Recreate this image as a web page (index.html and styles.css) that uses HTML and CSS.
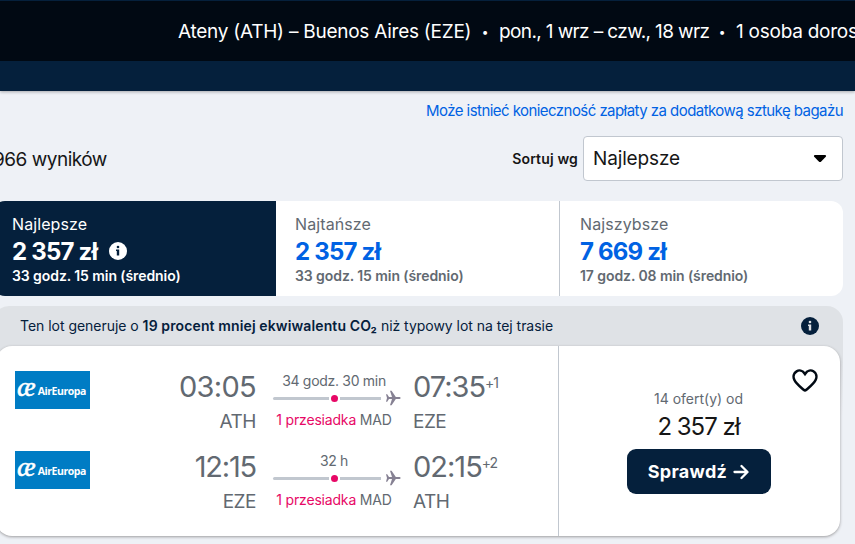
FILE: index.html
```html
<!DOCTYPE html>
<html lang="pl">
<head>
    <meta charset="UTF-8">
    <meta name="viewport" content="width=device-width, initial-scale=1.0">
    <title>Ateny (ATH) – Buenos Aires (EZE)</title>
    <link rel="stylesheet" href="styles.css">
</head>
<body>
    <header class="header">
        <div class="search-summary">
            <span class="route">Ateny (ATH) – Buenos Aires (EZE)</span>
            <span class="dot">•</span>
            <span class="dates">pon., 1 wrz – czw., 18 wrz</span>
            <span class="dot">•</span>
            <span class="travellers">1 osoba dorosła</span>
        </div>
    </header>

    <main class="results">
        <a class="baggage-link">Może istnieć konieczność zapłaty za dodatkową sztukę bagażu</a>

        <div class="toolbar">
            <span class="count">966 wyników</span>
            <div class="sort">
                <span class="sort-label">Sortuj wg</span>
                <div class="select">
                    <span class="select-value">Najlepsze</span>
                    <svg class="caret" width="14" height="9" viewBox="0 0 14 9"><path d="M2 1h10c1 0 1.400 1 .8 1.700L8.200 7.500c-.7.700-1.700.7-2.400 0L1.200 2.700C.6 2 1 1 2 1z"/></svg>
                </div>
            </div>
        </div>

        <div class="tabs">
            <div class="tab active">
                <span class="tab-name">Najlepsze</span>
                <div class="tab-price">
                    <span>2 357 zł</span>
                    <svg class="info" width="18" height="18" viewBox="0 0 18 18"><circle cx="9" cy="9" r="9" fill="#fff"/><path d="M7 7.500h3.200v6H7.800V9H7z" fill="#05203c"/><circle cx="9" cy="5" r="1.300" fill="#05203c"/></svg>
                </div>
                <span class="tab-time">33 godz. 15 min (średnio)</span>
            </div>
            <div class="tab">
                <span class="tab-name">Najtańsze</span>
                <div class="tab-price"><span>2 357 zł</span></div>
                <span class="tab-time">33 godz. 15 min (średnio)</span>
            </div>
            <div class="tab">
                <span class="tab-name">Najszybsze</span>
                <div class="tab-price"><span>7 669 zł</span></div>
                <span class="tab-time">17 godz. 08 min (średnio)</span>
            </div>
        </div>

        <div class="ticket-wrap">
            <div class="eco">
                <p class="eco-text">Ten lot generuje o <strong>19 procent mniej ekwiwalentu CO₂</strong> niż typowy lot na tej trasie</p>
                <svg class="info" width="18" height="18" viewBox="0 0 18 18"><circle cx="9" cy="9" r="9" fill="#05203c"/><path d="M7 7.500h3.200v6H7.800V9H7z" fill="#dfe2e6"/><circle cx="9" cy="5" r="1.300" fill="#dfe2e6"/></svg>
            </div>
            <div class="ticket">
                <div class="legs">
                    <div class="leg">
                        <div class="logo"><span class="logo-ae">æ</span><span class="logo-name">AirEuropa</span></div>
                        <div class="depart"><span class="time">03:05</span><span class="airport">ATH</span></div>
                        <div class="stops">
                            <span class="duration">34 godz. 30 min</span>
                            <div class="track">
                                <i class="line"></i><i class="stop-dot"></i><i class="line short"></i>
                                <svg class="plane" width="15" height="16" viewBox="0 0 15 16"><path d="M0 4.200h1.200L3 7h3L4 .8h1.600L9.800 7h3.600c1.600 0 1.600 2 0 2H9.800l-4.200 6.200H4L6 9H3l-1.800 2.800H0L1 8z"/></svg>
                            </div>
                            <span class="stop-text"><b class="stop-count">1 przesiadka</b> MAD</span>
                        </div>
                        <div class="arrive"><span class="time">07:35<sup>+1</sup></span><span class="airport">EZE</span></div>
                    </div>
                    <div class="leg">
                        <div class="logo"><span class="logo-ae">æ</span><span class="logo-name">AirEuropa</span></div>
                        <div class="depart"><span class="time narrow">12:15</span><span class="airport">EZE</span></div>
                        <div class="stops">
                            <span class="duration">32 h</span>
                            <div class="track">
                                <i class="line"></i><i class="stop-dot"></i><i class="line short"></i>
                                <svg class="plane" width="15" height="16" viewBox="0 0 15 16"><path d="M0 4.200h1.200L3 7h3L4 .8h1.600L9.800 7h3.600c1.600 0 1.600 2 0 2H9.800l-4.200 6.200H4L6 9H3l-1.800 2.800H0L1 8z"/></svg>
                            </div>
                            <span class="stop-text"><b class="stop-count">1 przesiadka</b> MAD</span>
                        </div>
                        <div class="arrive"><span class="time">02:15<sup>+2</sup></span><span class="airport">ATH</span></div>
                    </div>
                </div>
                <div class="offer">
                    <svg class="heart" width="26" height="23" viewBox="0 0 26 23"><path d="M13 5C10.500 1 6.800 1 4.600 2.300 1.800 4 .8 7.500 2.300 10.800 4.200 15 8.500 18 11.700 20.800c.8.700 1.800.7 2.600 0C17.500 18 21.800 15 23.700 10.800 25.200 7.500 24.200 4 21.400 2.300 19.200 1 15.500 1 13 5z"/></svg>
                    <span class="offers-count">14 ofert(y) od</span>
                    <span class="offer-price">2 357 zł</span>
                    <button class="check">Sprawdź
                        <svg width="16" height="16" viewBox="0 0 16 16"><path d="M1.500 8h12.500M8.500 2l6 6-6 6"/></svg>
                    </button>
                </div>
            </div>
        </div>
    </main>
</body>
</html>
```
FILE: styles.css
```css
:root {
    --navy: #05203c;
    --black: #010913;
    --grey: #626971;
    --blue: #0062e3;
    --pink: #e70866;
    --line: #c1c7cf;
}

* {
    margin: 0;
    padding: 0;
    box-sizing: border-box;
    font-family: Inter, 'Liberation Sans', sans-serif;
}

body {
    height: 544px;
    overflow: hidden;
    background: #eef1f6;
    color: #161616;
}

.header {
    height: 91px;
    padding-top: 1px;
    background: var(--navy);
    box-shadow: 0 1px 3px rgba(0,0,0,0.3);
}

.search-summary {
    display: flex;
    align-items: center;
    height: 60px;
    padding-left: 178px;
    background: var(--black);
    color: #fff;
    font-size: 19px;
    white-space: nowrap;
    overflow: hidden;
}

.search-summary span {
    flex-shrink: 0;
}

.route {
    width: 293px;
    letter-spacing: -0.25px;
}

.dates {
    width: 209px;
    letter-spacing: -0.62px;
}

.travellers {
    letter-spacing: -0.25px;
}

.search-summary .dot {
    width: 28px;
    text-align: center;
    font-size: 12px;
}

.results {
    width: 850px;
    margin-left: -7px;
}

.baggage-link {
    display: block;
    height: 45px;
    padding-top: 11px;
    color: var(--blue);
    font-size: 15px;
    line-height: 18px;
    letter-spacing: -0.55px;
    text-align: right;
}

.toolbar {
    display: flex;
    justify-content: space-between;
    align-items: center;
    height: 45px;
}

.count {
    padding-top: 2px;
    font-size: 19px;
    letter-spacing: -0.5px;
}

.sort {
    display: flex;
    align-items: center;
    gap: 5px;
}

.sort-label {
    font-size: 14px;
    font-weight: 600;
    letter-spacing: 0.15px;
}

.select {
    display: flex;
    justify-content: space-between;
    align-items: center;
    width: 260px;
    height: 45px;
    padding: 0 15px 0 9px;
    background: #fff;
    border: 1px solid var(--line);
    border-radius: 4px;
    font-size: 19px;
    letter-spacing: -0.15px;
}

.tabs {
    display: grid;
    grid-template-columns: 283px 284px 283px;
    height: 95px;
    margin-top: 20px;
    background: #fff;
    border-radius: 12px;
    overflow: hidden;
}

.tab {
    display: flex;
    flex-direction: column;
    padding: 13px 19px 0;
    color: var(--grey);
    white-space: nowrap;
}

.tab + .tab {
    border-right: 1px solid var(--line);
}

.tab:last-child {
    padding-left: 20px;
    border-right: 0;
}

.tab.active,
.active .tab-price {
    background: var(--navy);
    color: #fff;
}

.tab-name {
    font-size: 16px;
    line-height: 20px;
    letter-spacing: 0.1px;
}

.tab-price {
    display: flex;
    align-items: center;
    gap: 12px;
    height: 34px;
    color: var(--blue);
    font-size: 24px;
    font-weight: 700;
    letter-spacing: -0.8px;
}

.tab-time {
    font-size: 14px;
    font-weight: 600;
    line-height: 16px;
    letter-spacing: -0.08px;
}

.ticket-wrap {
    margin-top: 10px;
    background: linear-gradient(#dfe2e6 50px, transparent 110px);
    border-radius: 16px;
}

.eco {
    display: flex;
    justify-content: space-between;
    align-items: center;
    height: 40px;
    padding: 0 24px 2px 27px;
    color: var(--navy);
    font-size: 14px;
}

.eco .info {
    position: relative;
    top: 1px;
}

.eco-text {
    letter-spacing: -0.03px;
}

.eco strong {
    font-weight: 600;
    letter-spacing: 0.12px;
}

.ticket {
    display: flex;
    height: 190px;
    margin: 0 3px;
    background: #fff;
    border-radius: 16px;
    box-shadow: 0 1px 3px rgba(37,32,31,0.4);
}

.legs {
    width: 563px;
    padding-top: 20px;
    border-right: 1px solid var(--line);
}

.leg {
    display: flex;
    height: 80px;
    color: var(--grey);
}

.logo {
    display: flex;
    align-items: center;
    gap: 3px;
    width: 75px;
    height: 38px;
    margin: 5px 0 0 19px;
    padding-left: 2px;
    background: #007cc4;
    color: #fff;
    white-space: nowrap;
}

.logo-ae {
    font-family: 'Liberation Serif', serif;
    font-size: 28px;
    font-style: italic;
    line-height: 30px;
    letter-spacing: -1px;
    margin-top: -7px;
    -webkit-text-stroke: 0.5px #fff;
}

.logo-name {
    padding-top: 2px;
    font-family: 'Open Sans', sans-serif;
    font-size: 10.5px;
    font-weight: 700;
    letter-spacing: -0.45px;
}

.depart,
.arrive {
    display: flex;
    flex-direction: column;
}

.depart {
    width: 166px;
    align-items: flex-end;
}

.time {
    height: 39px;
    font-size: 29px;
    line-height: 42px;
    letter-spacing: -0.7px;
}

.time.narrow {
    letter-spacing: -1.2px;
}

.time sup {
    position: relative;
    top: 0;
    font-size: 14px;
    line-height: 0;
    vertical-align: 9px;
    letter-spacing: -1px;
}

.arrive .time {
    letter-spacing: -1px;
}

.airport {
    font-size: 19px;
    line-height: 34px;
    letter-spacing: -0.5px;
}

.stops {
    display: flex;
    flex-direction: column;
    width: 157px;
    padding: 5px 0 0 17px;
    font-size: 14px;
    line-height: 20px;
    white-space: nowrap;
}

.duration {
    width: 122px;
    text-align: center;
    letter-spacing: -0.3px;
}

.track {
    display: flex;
    align-items: center;
    height: 16px;
    margin-top: -1px;
}

.line {
    width: 56px;
    height: 3px;
    background: var(--line);
    border-radius: 2px 0 0 2px;
}

.line.short {
    width: 41px;
    border-radius: 0;
}

.stop-dot {
    width: 7px;
    height: 7px;
    margin: 0 2px;
    background: var(--pink);
    border-radius: 50%;
}

.plane {
    margin-left: 5px;
    fill: #868193;
}

.stop-text {
    width: 122px;
    margin-top: 4px;
    text-align: center;
    letter-spacing: -0.18px;
}

.stop-count {
    color: var(--pink);
    font-weight: 400;
}

.offer {
    position: relative;
    display: flex;
    flex: 1;
    flex-direction: column;
    align-items: center;
    padding: 43px 2px 0 0;
}

.heart {
    position: absolute;
    top: 23px;
    right: 22px;
    fill: none;
    stroke: #010913;
    stroke-width: 2.5;
}

.offers-count {
    color: var(--grey);
    font-size: 14px;
    line-height: 20px;
}

.offer-price {
    margin-top: 1px;
    font-size: 24px;
    line-height: 34px;
    letter-spacing: -1px;
}

.check {
    display: flex;
    justify-content: center;
    align-items: center;
    gap: 6px;
    width: 144px;
    height: 45px;
    margin-top: 5px;
    background: var(--navy);
    border: 0;
    border-radius: 9px;
    color: #fff;
    font-size: 18px;
    font-weight: 700;
    letter-spacing: 0.3px;
}

.check svg {
    fill: none;
    stroke: #fff;
    stroke-width: 2.3;
    stroke-linecap: round;
    stroke-linejoin: round;
}
```
